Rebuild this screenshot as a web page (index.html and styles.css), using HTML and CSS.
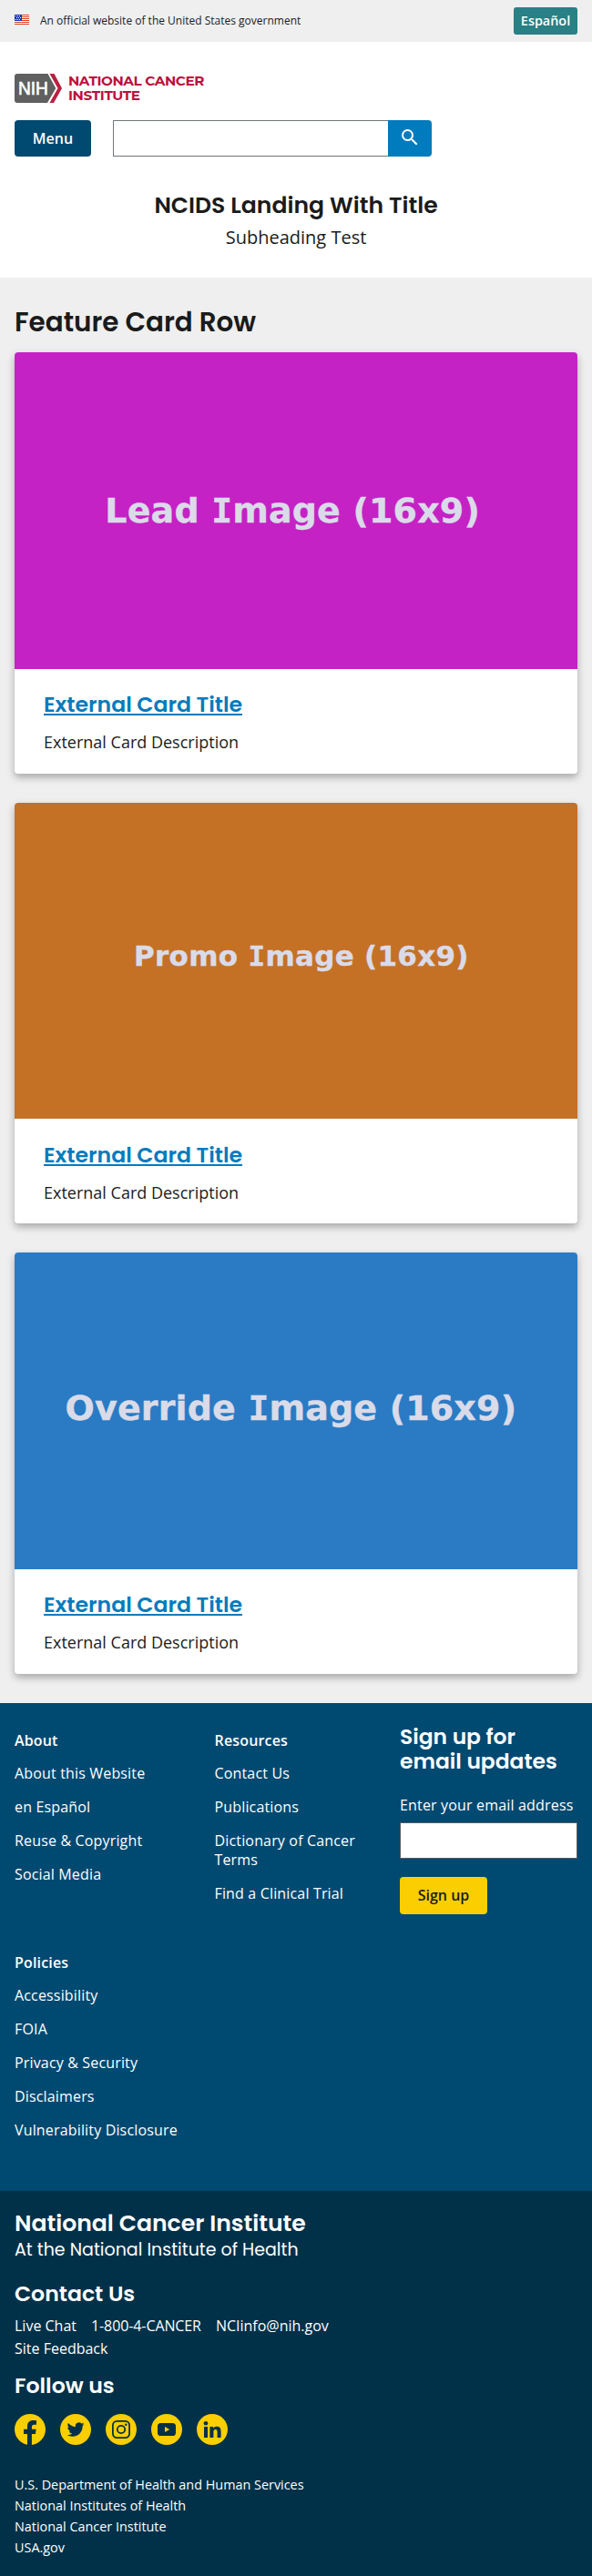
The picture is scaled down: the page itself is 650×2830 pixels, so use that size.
FILE: index.html
```html
<!DOCTYPE html>
<html lang="en">
<head>
<meta charset="utf-8">
<title>NCIDS Landing With Title</title>
<link rel="stylesheet" href="styles.css">
</head>
<body>
<div class="banner">
  <svg class="flag" width="16" height="11" viewBox="0 0 16 11"><path fill="#fff" d="M0 0h16v11H0z"/><path fill="#db3e1f" d="M0 0h16v1H0zM0 2h16v1H0zM0 4h16v1H0zM0 6h16v1H0zM0 8h16v1H0zM0 10h16v1H0z"/><path fill="#1e33b1" d="M0 0h8v7H0z"/><path fill="#fff" d="M1 1h1v1H1zM3 1h1v1H3zM5 1h1v1H5zM2 3h1v1H2zM4 3h1v1H4zM6 3h1v1H6zM1 5h1v1H1zM3 5h1v1H3zM5 5h1v1H5z"/></svg>
  <span class="banner-text">An official website of the United States government</span>
  <a class="lang">Español</a>
</div>
<header class="header">
  <svg class="logo" width="210" height="34" viewBox="0 0 210 34">
    <path fill="#606060" d="M3 1h33.500l8.800 16-9.300 16H3a3 3 0 0 1-3-3V4a3 3 0 0 1 3-3z"/>
    <path fill="#bb1f40" d="M38.500 1h5L52 17l-9 16h-4.500l9-16z"/>
    <text class="logo-nih" x="3.900" y="24" textLength="33" lengthAdjust="spacingAndGlyphs">NIH</text>
    <text class="logo-name" x="58.900" y="14.300" textLength="149.500">NATIONAL CANCER</text>
    <text class="logo-name" x="58.900" y="29.800" textLength="79">INSTITUTE</text>
  </svg>
  <div class="tools">
    <button class="menu">Menu</button>
    <div class="search">
      <input class="search-input" type="text" aria-label="Search">
      <button class="search-btn" aria-label="Search"><svg width="24" height="24" viewBox="0 0 24 24"><path fill="#fff" d="M15.500 14h-.79l-.28-.27A6.471 6.471 0 0 0 16 9.500 6.500 6.500 0 1 0 9.500 16c1.610 0 3.090-.59 4.230-1.570l.27.28v.79l5 4.990L20.490 19l-4.990-5zm-6 0C7.010 14 5 11.990 5 9.500S7.010 5 9.500 5 14 7.010 14 9.500 11.990 14 9.500 14z"/></svg></button>
    </div>
  </div>
</header>
<div class="hero">
  <h1 class="hero-title">NCIDS Landing With Title</h1>
  <p class="hero-sub">Subheading Test</p>
</div>
<main class="features">
  <h2 class="features-title">Feature Card Row</h2>
  <div class="cards">
    <article class="card">
      <svg class="card-img lead" viewBox="0 0 618 347.625"><text class="img-text" x="99.300" y="187.300" font-size="38" textLength="411.500">Lead <tspan class="slab">I</tspan>mage (16x9)</text></svg>
      <div class="card-body"><h3 class="card-title"><a>External Card Title</a></h3><p class="card-desc">External Card Description</p></div>
    </article>
    <article class="card">
      <svg class="card-img promo" viewBox="0 0 618 347.625"><text class="img-text" x="131" y="179.300" font-size="31" textLength="367.500">Promo <tspan class="slab">I</tspan>mage (16x9)</text></svg>
      <div class="card-body"><h3 class="card-title"><a>External Card Title</a></h3><p class="card-desc">External Card Description</p></div>
    </article>
    <article class="card">
      <svg class="card-img override" viewBox="0 0 618 347.625"><text class="img-text" x="55.500" y="184.300" font-size="38" textLength="495.500">Override <tspan class="slab">I</tspan>mage (16x9)</text></svg>
      <div class="card-body"><h3 class="card-title"><a>External Card Title</a></h3><p class="card-desc">External Card Description</p></div>
    </article>
  </div>
</main>
<footer>
  <div class="foot-main">
    <nav class="foot-nav">
      <section class="foot-col"><h3>About</h3><ul><li>About this Website</li><li>en Español</li><li>Reuse &amp; Copyright</li><li>Social Media</li></ul></section>
      <section class="foot-col"><h3>Resources</h3><ul><li>Contact Us</li><li>Publications</li><li>Dictionary of Cancer Terms</li><li>Find a Clinical Trial</li></ul></section>
      <section class="foot-col"><h3>Policies</h3><ul><li>Accessibility</li><li>FOIA</li><li>Privacy &amp; Security</li><li>Disclaimers</li><li>Vulnerability Disclosure</li></ul></section>
    </nav>
    <form class="signup">
      <h3 class="signup-title">Sign up for<br>email updates</h3>
      <label class="signup-label" for="email">Enter your email address</label>
      <input class="signup-input" id="email" type="email">
      <button class="signup-btn" type="button">Sign up</button>
    </form>
  </div>
  <div class="foot-id">
    <div class="org">National Cancer Institute</div>
    <div class="parent">At the National Institute of Health</div>
    <h3 class="foot-h contact-h">Contact Us</h3>
    <div class="contact"><span>Live Chat</span><span class="phone">1-800-4-CANCER</span><span>NCIinfo@nih.gov</span><span>Site Feedback</span></div>
    <h3 class="foot-h follow-h">Follow us</h3>
    <div class="social">
      <svg viewBox="0 0 34 34"><circle class="disc" cx="17" cy="17" r="17"/><path class="mark" d="M14 34V22h-4v-5.200h4v-3.300c0-4.300 2.500-6.600 6.300-6.600 1.300 0 2.600.1 3.700.3v4.500h-2.200c-2.100 0-2.900 1.200-2.900 2.500v2.600h4.800l-.8 5.200h-4v12z"/></svg>
      <svg viewBox="0 0 34 34"><circle class="disc" cx="17" cy="17" r="17"/><path class="mark" transform="translate(7.600 7.600) scale(.79)" d="M23.953 4.570a10 10 0 0 1-2.825.775 4.958 4.958 0 0 0 2.163-2.723c-.951.555-2.005.959-3.127 1.184a4.920 4.920 0 0 0-8.384 4.482C7.690 8.095 4.067 6.130 1.640 3.162a4.822 4.822 0 0 0-.666 2.475c0 1.710.87 3.213 2.188 4.096a4.904 4.904 0 0 1-2.228-.616v.06a4.923 4.923 0 0 0 3.946 4.827 4.996 4.996 0 0 1-2.212.085 4.936 4.936 0 0 0 4.604 3.417 9.867 9.867 0 0 1-6.102 2.105c-.39 0-.779-.023-1.170-.067a13.995 13.995 0 0 0 7.557 2.209c9.053 0 13.998-7.496 13.998-13.985 0-.21 0-.42-.015-.63A9.935 9.935 0 0 0 24 4.590z"/></svg>
      <svg viewBox="0 0 34 34"><circle class="disc" cx="17" cy="17" r="17"/><rect class="line" x="7.900" y="7.900" width="18.200" height="18.200" rx="4.600"/><circle class="line" cx="17" cy="17" r="4.200"/><circle class="mark" cx="22.300" cy="11.700" r="1.200"/></svg>
      <svg viewBox="0 0 34 34"><circle class="disc" cx="17" cy="17" r="17"/><rect class="mark" x="7" y="10" width="20" height="14" rx="3.600"/><path class="disc" d="M15 14v6l5.200-3z"/></svg>
      <svg viewBox="0 0 34 34"><circle class="disc" cx="17" cy="17" r="17"/><path class="mark" d="M8 14h4v12H8zM14.400 14h3.800v1.700c.7-1.200 2-2 3.800-2 3.700 0 4.600 2.300 4.600 5.700V26h-4v-5.900c0-1.500-.1-3.100-2-3.100s-2.200 1.400-2.200 3V26h-4z"/><circle class="mark" cx="10" cy="10.200" r="2.300"/></svg>
    </div>
    <div class="agencies"><div>U.S. Department of Health and Human Services</div><div>National Institutes of Health</div><div>National Cancer Institute</div><div>USA.gov</div></div>
  </div>
</footer>
</body>
</html>
```
FILE: styles.css
```css
* { box-sizing: border-box; }
body, h1, h2, h3, p, ul { margin: 0; padding: 0; }
ul { list-style: none; }
svg { display: block; flex: none; }
body { font-family: "Open Sans", sans-serif; font-size: 16px; color: #1b1b1b; background: #fff; }
h1, h2, .card-title, .signup-title, .org, .parent, .foot-h { font-family: Poppins, Inter, sans-serif; font-weight: 600; }
button { font-family: inherit; border: 0; padding: 0; }
input { border-radius: 0; outline: 0; }

.banner { height: 46px; background: #efefef; display: flex; align-items: center; padding: 0 16px; }
.flag { margin: -3px 12px 0 0; }
.banner-text { font-size: 12px; line-height: 18px; flex: 1; }
.lang { width: 70px; height: 30px; border-radius: 3px; background: #298085; color: #fff; font-size: 14.400px; font-weight: 600; line-height: 30px; text-align: center; }

.header { padding: 34px 16px 0; }
.logo-nih { font: 400 21px "Liberation Sans", Arial, sans-serif; fill: #fff; stroke: #fff; stroke-width: .7; }
.logo-name { font: 700 15.200px Montserrat, Inter, sans-serif; fill: #bb0e3d; }
.tools { display: flex; gap: 24px; margin-top: 18px; }
.menu { width: 84px; height: 40px; border-radius: 4px; background: #004971; color: #fff; font-size: 16px; font-weight: 600; line-height: 40px; }
.search { display: flex; }
.search-input { width: 302px; height: 40px; border: 1px solid #71767a; border-right: 0; }
.search-btn { width: 48px; height: 40px; background: #007bbd; border-radius: 0 4px 4px 0; display: flex; justify-content: center; padding-top: 7px; }

.hero { height: 133px; padding-top: 38px; text-align: center; }
.hero-title { font-size: 25.100px; line-height: 32px; }
.hero-sub { font-size: 20px; line-height: 28px; margin-top: 4.500px; }

.features { background: #efefef; padding: 31px 16px 32px; }
.features-title { font-size: 29.400px; line-height: 36px; margin-bottom: 15px; }
.cards { display: flex; flex-direction: column; gap: 32px; }
.card { background: #fff; border-radius: 4px; overflow: hidden; box-shadow: 0 4px 8px rgba(0,0,0,.3); }
.card-img { width: 100%; height: 347.625px; }
.lead { background: #c522c5; }
.promo { background: #c47126; }
.override { background: #2a7bc4; }
.img-text { font-family: "DejaVu Sans", sans-serif; font-weight: 700; fill: #dadbe9; stroke: #dadbe9; stroke-width: .4; }
.slab { font-family: "DejaVu Sans Mono", monospace; }
.card-body { height: 115px; padding: 25.300px 32px 0; }
.card-title { font-size: 23.600px; line-height: 28px; color: #007bbd; }
.card-title a { text-decoration: underline; text-decoration-thickness: 2px; text-underline-offset: 2px; text-decoration-skip-ink: none; }
.card-desc { font-size: 18px; line-height: 28px; margin-top: 13.100px; }

.foot-main { height: 536px; background: #004971; color: #fff; display: flex; padding: 0 16px; }
.foot-nav { width: 423px; padding-top: 31px; display: grid; grid-template-columns: 219.500px 176px; align-content: start; row-gap: 55px; line-height: 21px; letter-spacing: .16px; }
.foot-col h3 { font-size: 16px; font-weight: 600; margin-bottom: 15px; }
.foot-col ul { display: flex; flex-direction: column; gap: 16px; }
.signup { width: 195px; padding-top: 23px; }
.signup-title { font-size: 23.400px; line-height: 27px; margin-bottom: 23px; white-space: nowrap; }
.signup-label { display: block; line-height: 24px; white-space: nowrap; letter-spacing: .17px; }
.signup-input { display: block; width: 195px; height: 40px; border: 1px solid #565c65; margin: 7px 0 20px; }
.signup-btn { width: 96px; height: 41px; border-radius: 4px; background: #face00; color: #1b1b1b; font-size: 16px; font-weight: 600; }

.foot-id { height: 423px; background: #003149; color: #fff; padding: 21px 16px 0; }
.org { font-size: 25.100px; line-height: 30px; }
.parent { font-size: 19px; line-height: 26px; margin-top: 1px; font-weight: 400; }
.foot-h { font-size: 23.600px; line-height: 28px; }
.contact-h { margin: 21px 0 9px; }
.contact { display: flex; flex-wrap: wrap; column-gap: 16px; width: 400px; line-height: 25px; }
.phone { letter-spacing: -.1px; }
.follow-h { margin: 14px 0 17px; }
.social { display: flex; gap: 16px; }
.social svg { width: 34px; height: 34px; }
.disc { fill: #face00; }
.mark { fill: #003149; }
.line { fill: none; stroke: #003149; stroke-width: 1.800; }
.agencies { margin-top: 32px; font-size: 14.400px; line-height: 23px; }
```
